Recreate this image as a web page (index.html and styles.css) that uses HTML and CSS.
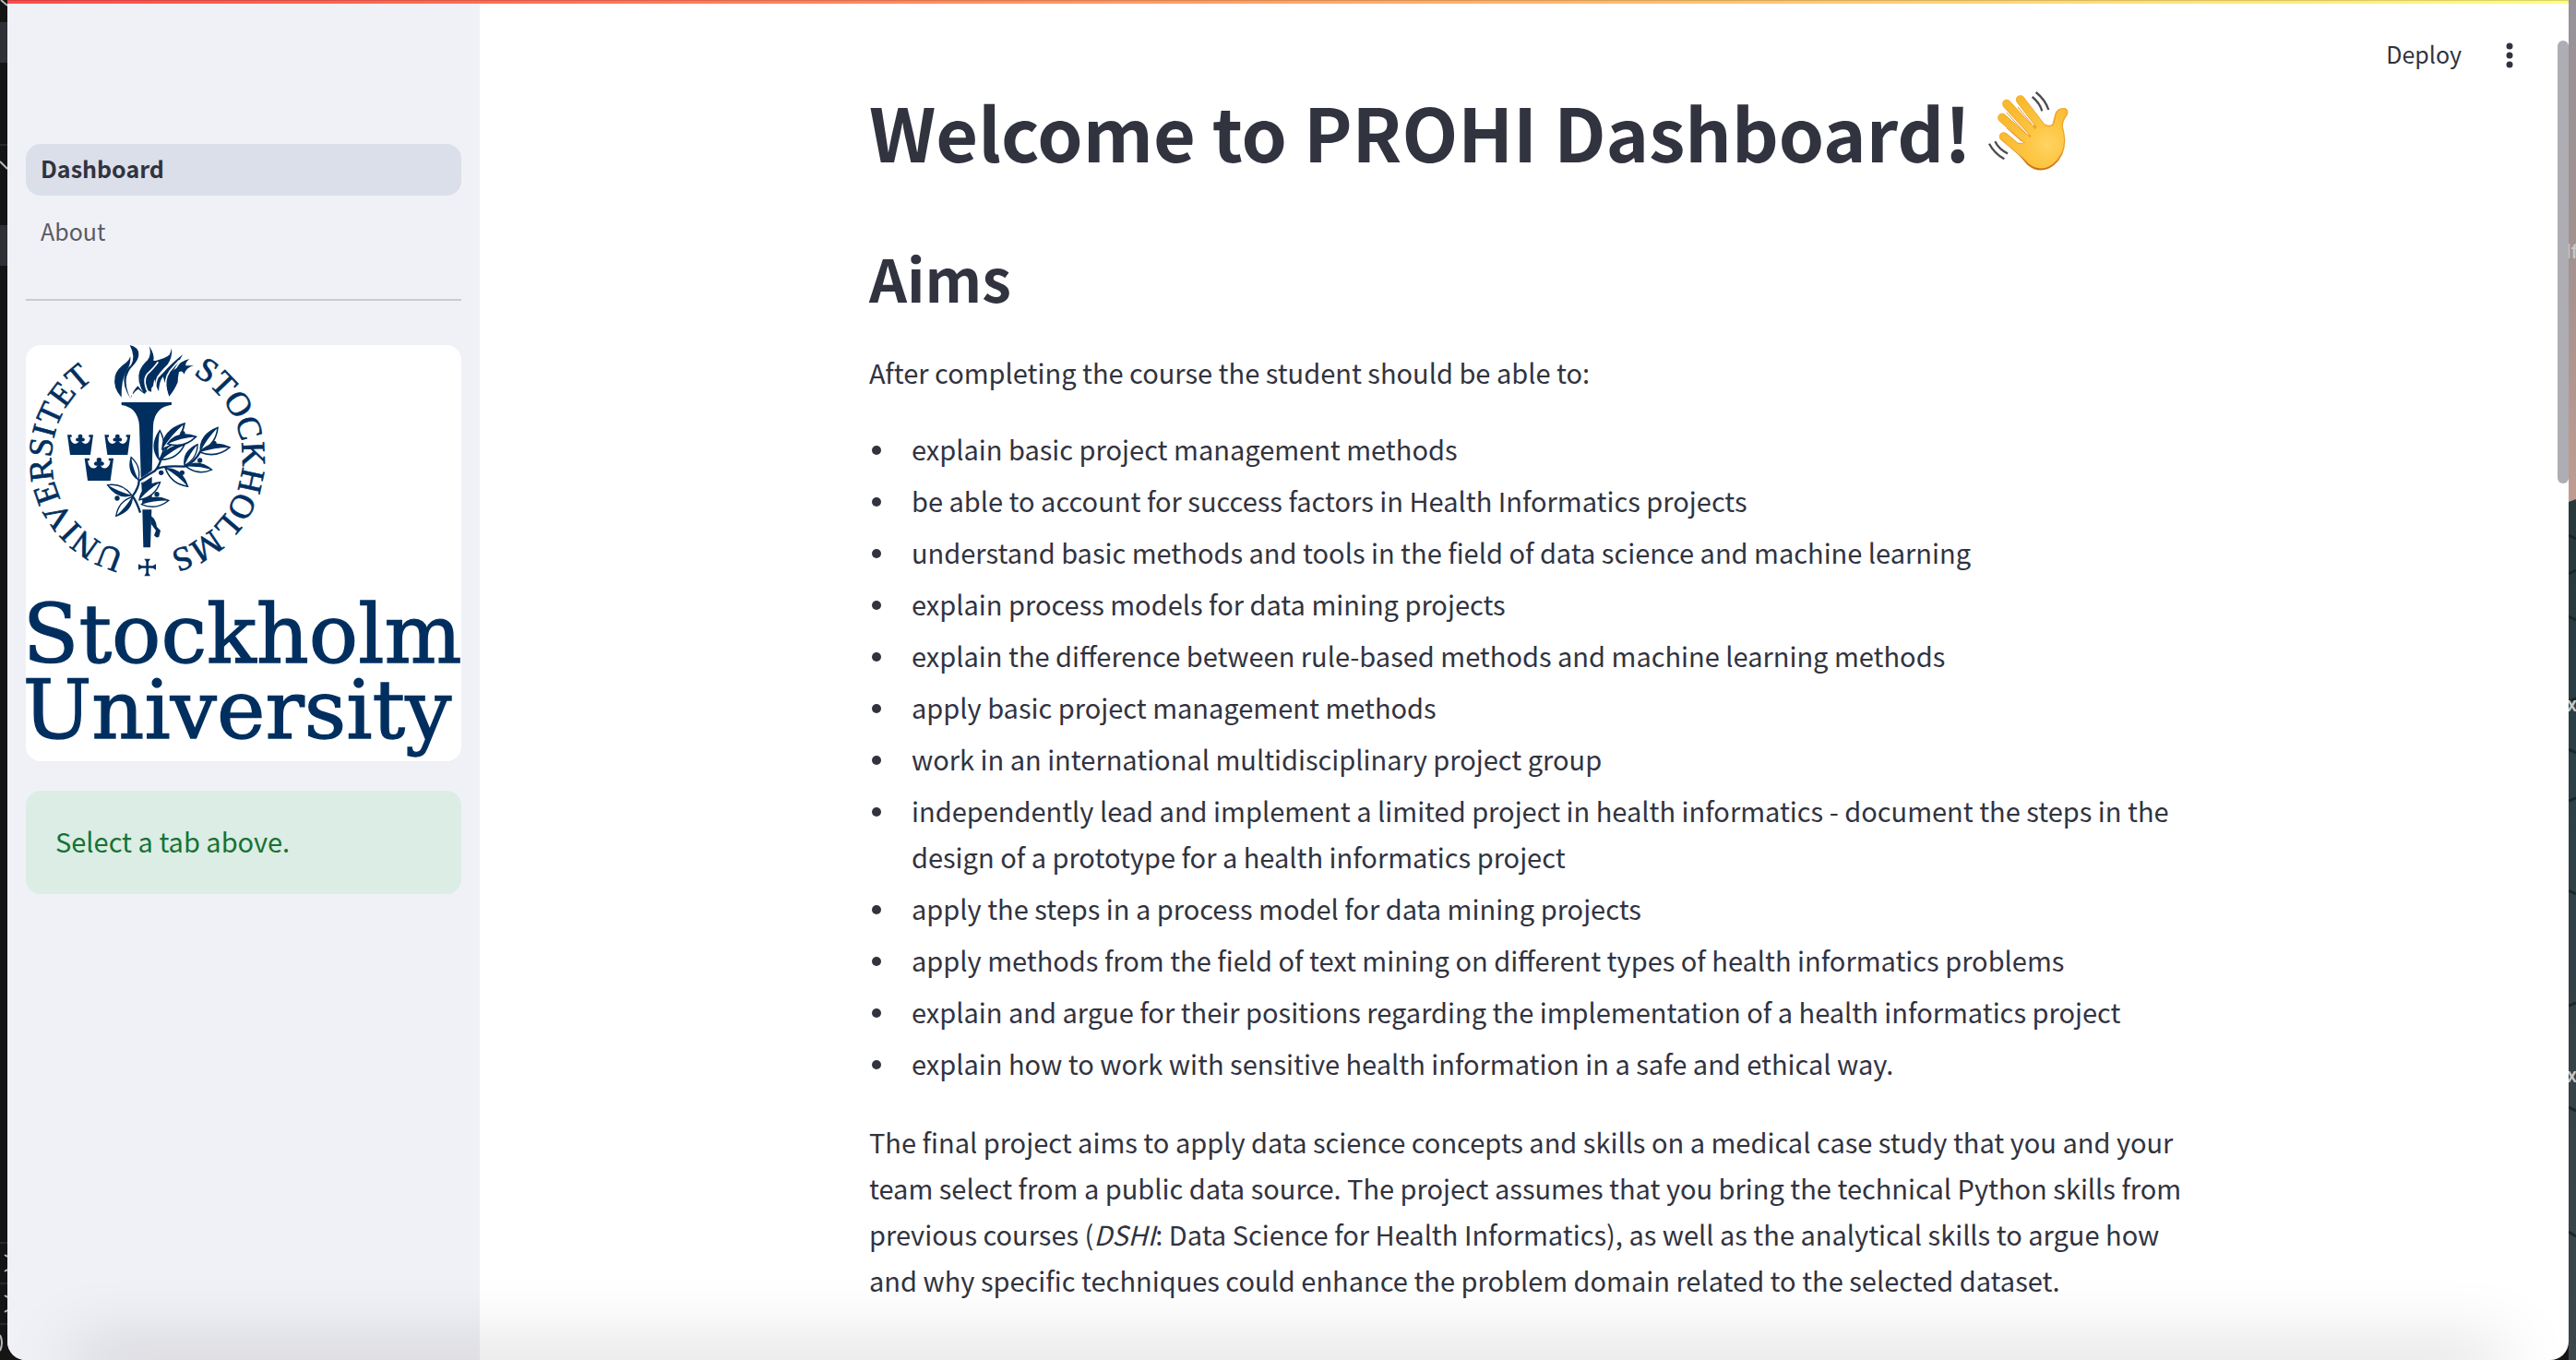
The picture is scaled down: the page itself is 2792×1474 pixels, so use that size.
FILE: index.html
```html
<!DOCTYPE html>
<html lang="en">
<head>
<meta charset="utf-8">
<title>Dashboard</title>
<link rel="stylesheet" href="styles.css">
</head>
<body>
<div class="desktop">
  <div class="edge edge-left" aria-hidden="true">
    <svg width="8" height="1474" viewBox="0 0 8 1474">
      <path fill="#303036" d="M0 24h8v44H0zM0 244h8v44H0z"/>
      <path fill="#29292c" d="M0 156h8v2H0zM0 1346h8v2H0zM0 1390h8v2H0zM0 1434h8v2H0z"/>
      <path fill="none" stroke="#b9b9bb" stroke-width="2" d="M1 0l7 6M0 175l8 8M5 1360l3 2M5 1378l3-2M5 1404l3 2M5 1422l3-2M0 1447q4 8 0 17"/>
    </svg>
  </div>

  <div class="window">
    <div class="decoration"></div>
    <aside class="sidebar">
      <nav class="nav">
        <a class="nav-link nav-link-active" href="#dashboard">Dashboard</a>
        <a class="nav-link" href="#about">About</a>
      </nav>
      <hr class="divider">
      <svg class="logo" viewBox="24 27 1416 1353" role="img" aria-label="Stockholm University">
        <defs>
          <path id="ring-right" d="M418 85a310 310 0 0 1 0 620"/>
          <path id="ring-left" d="M418 705a310 310 0 0 1 0-620"/>
          <g id="leaf">
            <path d="M0 0Q44-36 100 0Q50 30 0 0Z" fill="#fff" stroke="#002f5f" stroke-width="5"/>
            <path d="M0 0Q44-36 100 0Q50-8 0 0Z" fill="#002f5f"/>
          </g>
          <path id="crown" d="M9 67L0 2H14V9H9Q12 31 26 31Q35 30 38 22Q30 26 27 18Q29 9 36 12Q32 0 42 0Q52 0 48 12Q55 9 57 18Q54 26 46 22Q49 30 58 31Q72 31 75 9H70V2H84L75 67Z"/>
        </defs>
        <g fill="#002f5f">
          <text class="logo-ring"><textPath href="#ring-right" startOffset="155">STOCKHOLMS</textPath></text>
          <text class="logo-ring"><textPath href="#ring-left" startOffset="73">UNIVERSITET</textPath></text>
          <path d="M335 197Q306 165 314 128Q320 104 350 84Q360 76 364 64Q366 90 352 110Q334 138 335 197Z"/>
          <path d="M362 27Q392 34 391 58Q390 76 374 92Q352 114 350 140Q348 166 364 201Q372 176 388 160L405 180Q384 140 394 112Q402 92 420 76Q434 58 425 30Q446 62 438 80Q420 104 404 116Q392 128 400 150L416 175Q418 140 440 112Q456 92 480 76Q494 60 498 37Q502 66 484 92Q462 110 454 134L470 118Q496 88 534 58Q514 96 500 114Q486 132 486 152L494 182Q484 176 480 160L470 130Q458 144 456 178Q444 158 442 136Q432 154 432 180Q420 168 410 186Q396 176 390 170Q376 176 364 201Q338 160 344 128Q350 104 366 92Q382 66 362 27Z"/>
          <path d="M396 112Q410 72 446 78Q478 70 492 58Q480 92 462 112Q440 132 438 160L420 180L402 158Q392 136 396 112Z"/>
          <path d="M490 194Q474 156 486 130Q496 112 514 102Q526 78 556 72Q542 84 544 94H570Q546 100 538 122Q534 108 522 114Q518 132 518 148Q506 176 490 194Z"/>
          <path fill="none" stroke="#fff" stroke-width="5" d="M372 194Q352 150 372 122Q394 96 402 72M424 186Q402 144 418 122Q442 100 454 82M447 188Q440 140 464 116Q490 92 502 72M482 180Q472 140 492 112Q510 90 524 76"/>
          <path d="M335 213H498V221Q470 225 457 240Q439 260 438 290L434 440L399 480L393 290Q391 258 374 240Q360 226 335 222Z"/>
          <path d="M400 478L434 455V540H403ZM403 562H433L429 685H406ZM432 583Q448 596 450 618L462 630L457 650Q448 656 441 646L447 630L432 610Z"/>
          <path fill="none" stroke="#fff" stroke-width="14" d="M462 420Q430 450 394 470"/>
          <path fill="none" stroke="#002f5f" stroke-width="7" d="M396 572Q386 540 371 518Q392 490 392 468Q420 450 444 436Q458 420 465 395L488 348M450 430Q470 418 540 422Q574 408 592 372"/>
          <use href="#leaf" transform="translate(458 400) rotate(-89) scale(.95)"/>
          <use href="#leaf" transform="translate(468 365) rotate(-49) scale(1.09)"/>
          <use href="#leaf" transform="translate(485 348) rotate(-14) scale(.95)"/>
          <use href="#leaf" transform="translate(465 400) rotate(-33) scale(.89)"/>
          <use href="#leaf" transform="translate(540 418) rotate(-58) scale(.8)"/>
          <use href="#leaf" transform="translate(592 372) rotate(-54) scale(.95)"/>
          <use href="#leaf" transform="translate(590 375) rotate(-9) scale(.98)"/>
          <use href="#leaf" transform="translate(545 422) rotate(7) scale(.84)"/>
          <use href="#leaf" transform="translate(478 428) rotate(39) scale(.93)"/>
          <use href="#leaf" transform="translate(390 465) rotate(-108) scale(.77)"/>
          <use href="#leaf" transform="translate(368 515) rotate(-157) scale(.85)"/>
          <use href="#leaf" transform="translate(370 520) rotate(130) scale(.82)"/>
          <use href="#leaf" transform="translate(393 530) rotate(-40) scale(.88)"/>
          <use href="#leaf" transform="translate(400 545) rotate(-8) scale(.89)"/>
          <circle cx="534" cy="314" r="8"/><circle cx="636" cy="346" r="8"/><circle cx="590" cy="402" r="8"/>
          <circle cx="464" cy="442" r="8"/><circle cx="532" cy="442" r="8"/><circle cx="450" cy="512" r="8"/><circle cx="321" cy="525" r="8"/>
          <use href="#crown" transform="translate(159 317)"/>
          <use href="#crown" transform="translate(280 317)"/>
          <use href="#crown" transform="translate(215 393) scale(1.12)"/>
          <path d="M409 722H429L423 731V745H437L447 739V758L437 752H423V768L429 778H409L415 768V752H401L390 758V739L401 745H415V731Z"/>
          <text class="logo-name" x="14" y="1060">Stockholm</text>
          <text class="logo-name" x="14" y="1306">University</text>
        </g>
      </svg>
      <div class="notice" role="status">Select a tab above.</div>
    </aside>

    <div class="view">
      <header class="toolbar">
        <button class="deploy" type="button">Deploy</button>
        <button class="menu" type="button" aria-label="Main menu">
          <svg width="8" height="28" viewBox="0 0 8 28" fill="#31333f"><circle cx="4" cy="4" r="3.5"/><circle cx="4" cy="14" r="3.5"/><circle cx="4" cy="24" r="3.5"/></svg>
        </button>
      </header>
      <main class="content">
        <h1 class="title">Welcome to PROHI Dashboard!
          <svg class="wave" viewBox="20 20 264 264" role="img" aria-label="Waving hand">
            <defs>
              <radialGradient id="skin" gradientUnits="userSpaceOnUse" cx="215" cy="195" r="165">
                <stop offset="0" stop-color="#ffd462"/><stop offset=".45" stop-color="#fdc43f"/><stop offset="1" stop-color="#f9b92f"/>
              </radialGradient>
              <linearGradient id="rim" gradientUnits="userSpaceOnUse" x1="0" y1="40" x2="0" y2="280">
                <stop offset="0" stop-color="#f3ab2b"/><stop offset=".7" stop-color="#eb9f2b"/><stop offset="1" stop-color="#c96d12"/>
              </linearGradient>
            </defs>
            <g fill="none" stroke="url(#rim)" stroke-linecap="round">
              <path stroke-width="29" d="M127 50L200 145M83 64L180 170M68 109L165 195M73 170L150 235"/>
              <path fill="url(#rim)" stroke="none" d="M88 190L150 262Q192 296 236 264Q274 232 273 180Q271 158 266 138Q264 122 279 102Q288 84 272 77Q248 74 240 96Q234 118 232 128Q224 138 210 130L170 130L140 190Z"/>
            </g>
            <g fill="none" stroke="url(#skin)" stroke-linecap="round">
              <path stroke-width="24" d="M127 50L200 145M83 64L180 170M68 109L165 195M73 170L150 235"/>
              <path fill="url(#skin)" stroke="none" d="M100 196L154 258Q192 288 232 260Q270 228 269 180Q268 158 262 138Q260 120 275 100Q283 86 270 80Q252 78 244 98Q240 122 236 132Q226 142 210 135L180 140L150 190Z"/>
            </g>
            <path fill="none" stroke="#e89526" stroke-width="3" stroke-linecap="round" d="M120 75L165 130M83 93L147 162M84 143L130 184"/>
            <path fill="none" stroke="#4d4d4f" stroke-width="7" d="M178 26Q208 50 219 83M166 41Q190 60 198 87M26 193Q42 224 75 243M45 186Q58 212 86 225"/>
          </svg>
        </h1>
        <h2 class="heading">Aims</h2>
        <p>After completing the course the student should be able to:</p>
        <ul class="aims">
          <li>explain basic project management methods</li>
          <li>be able to account for success factors in Health Informatics projects</li>
          <li>understand basic methods and tools in the field of data science and machine learning</li>
          <li>explain process models for data mining projects</li>
          <li>explain the difference between rule-based methods and machine learning methods</li>
          <li>apply basic project management methods</li>
          <li>work in an international multidisciplinary project group</li>
          <li>independently lead and implement a limited project in health informatics - document the steps in the design of a prototype for a health informatics project</li>
          <li>apply the steps in a process model for data mining projects</li>
          <li>apply methods from the field of text mining on different types of health informatics problems</li>
          <li>explain and argue for their positions regarding the implementation of a health informatics project</li>
          <li>explain how to work with sensitive health information in a safe and ethical way.</li>
        </ul>
        <p>The final project aims to apply data science concepts and skills on a medical case study that you and your team select from a public data source. The project assumes that you bring the technical Python skills from previous courses (<em>DSHI</em>: Data Science for Health Informatics), as well as the analytical skills to argue how and why specific techniques could enhance the problem domain related to the selected dataset.</p>
      </main>
    </div>
    <div class="scrollbar" aria-hidden="true"></div>
    <div class="shade"></div>
  </div>

  <div class="edge edge-right" aria-hidden="true">
    <svg width="8" height="1474" viewBox="0 0 8 1474">
      <defs>
        <linearGradient id="sky" x1="0" y1="0" x2="0" y2="1"><stop offset="0" stop-color="#97929a"/><stop offset=".5" stop-color="#a2928f"/><stop offset="1" stop-color="#c09c90"/></linearGradient>
        <linearGradient id="sea" x1="0" y1="0" x2="0" y2="1"><stop offset="0" stop-color="#28383a"/><stop offset=".3" stop-color="#2b4047"/><stop offset=".6" stop-color="#344147"/><stop offset="1" stop-color="#3b474b"/></linearGradient>
      </defs>
      <path fill="url(#sky)" d="M0 0h8v545H0z"/>
      <path fill="url(#sea)" d="M0 544l8-3v933H0z"/>
      <path stroke="#1c2626" stroke-width="3" d="M0 580l8 4M0 622l8-4M0 668l8 4M0 760l8-3M0 812l8 4M0 868l8-3M0 965l8 4M0 1090l8-3M0 1200l8 4M0 1335l8 5"/>
      <g class="edge-label"><text x="-3" y="280">lf</text><text x="-2" y="771">x</text><text x="-2" y="1173">x</text></g>
    </svg>
  </div>
</div>
</body>
</html>
```
FILE: styles.css
```css
* {
  box-sizing: border-box;
}

body {
  margin: 0;
  background: #151515;
  color: #31333f;
  font-family: "Noto Sans CJK SC", "Source Sans Pro", sans-serif;
  font-size: 29px;
  line-height: 50px;
}

.desktop {
  display: grid;
  grid-template-columns: 8px minmax(0, 1fr) 8px;
  height: 100vh;
  overflow: hidden;
}

.edge {
  overflow: hidden;
  background: #151515;
}

.edge svg {
  display: block;
}

.edge-right {
  background: #3b474b;
}

.edge-label {
  fill: #c8c8c8;
  font-family: Roboto, sans-serif;
  font-size: 22px;
  font-weight: 500;
}

.window {
  position: relative;
  display: grid;
  grid-template-columns: 512px minmax(0, 1fr) 12px;
  overflow: hidden;
  border-radius: 0 0 20px 20px;
  background: #fff;
}

.decoration {
  position: absolute;
  inset: 0 0 auto;
  height: 4px;
  border-top: 1px solid rgba(0, 0, 0, 0.15);
  background: linear-gradient(90deg, #ff4b4b, #fffd80) border-box;
}

.sidebar {
  display: flex;
  flex-direction: column;
  padding: 156px 20px 0;
  background: #f0f1f6;
}

.nav {
  display: flex;
  flex-direction: column;
  gap: 12px;
}

.nav-link {
  padding: 0 16px 4px;
  border-radius: 16px;
  color: #5a5b64;
  font-size: 25px;
  line-height: 52px;
  text-decoration: none;
}

.nav-link-active {
  background: #dbdfea;
  color: #31333f;
  font-weight: 700;
}

.divider {
  width: 100%;
  height: 2px;
  margin: 44px 0 48px;
  border: 0;
  background: #c9cbd1;
}

.logo {
  display: block;
  width: 100%;
  border-radius: 16px;
  background: #fff;
}

.logo-ring {
  font-family: "Liberation Serif", serif;
  font-size: 110px;
  stroke: #002f5f;
  stroke-width: 2px;
}

.logo-name {
  font-family: "DejaVu Serif", serif;
  font-size: 266px;
  stroke: #002f5f;
  stroke-width: 4px;
}

.notice {
  margin-top: 32px;
  padding: 29px 32px 33px;
  border-radius: 16px;
  background: #dbede4;
  color: #177233;
}

.view {
  min-width: 0;
}

.toolbar {
  display: flex;
  justify-content: flex-end;
  gap: 48px;
  height: 94px;
  padding: 30px 48px 0 0;
}

.deploy,
.menu {
  height: 60px;
  padding: 0;
  border: 0;
  background: none;
  color: inherit;
  font: inherit;
  font-size: 25px;
}

.deploy {
  padding-bottom: 4px;
}

.menu {
  display: flex;
  align-items: center;
}

.content {
  max-width: 1440px;
  margin: 0 auto;
  padding-left: 16px;
}

.content p,
.title,
.heading {
  margin: 0;
}

.title {
  margin-bottom: 71px;
  font-size: 79px;
  font-weight: 700;
  line-height: 96px;
}

.wave {
  width: 88px;
  height: 88px;
  vertical-align: -10px;
}

.heading {
  margin-bottom: 39px;
  font-size: 64px;
  font-weight: 600;
  line-height: 78px;
}

.aims {
  display: flex;
  flex-direction: column;
  gap: 6px;
  margin: 33px 0 35px;
  padding: 0;
  list-style: none;
}

.aims li {
  display: grid;
  grid-template-columns: 46px minmax(0, 1fr);
}

.aims li::before {
  width: 10px;
  height: 10px;
  margin: 22px 0 0 3px;
  border-radius: 50%;
  background: #31333f;
  content: "";
}

.scrollbar {
  height: 480px;
  margin-top: 44px;
  border-radius: 6px;
  background: #adadb3;
}

.shade {
  position: absolute;
  right: 80px;
  bottom: -10px;
  left: 80px;
  height: 10px;
  box-shadow: 0 0 75px 8px rgba(0, 0, 0, 0.26);
}
```
